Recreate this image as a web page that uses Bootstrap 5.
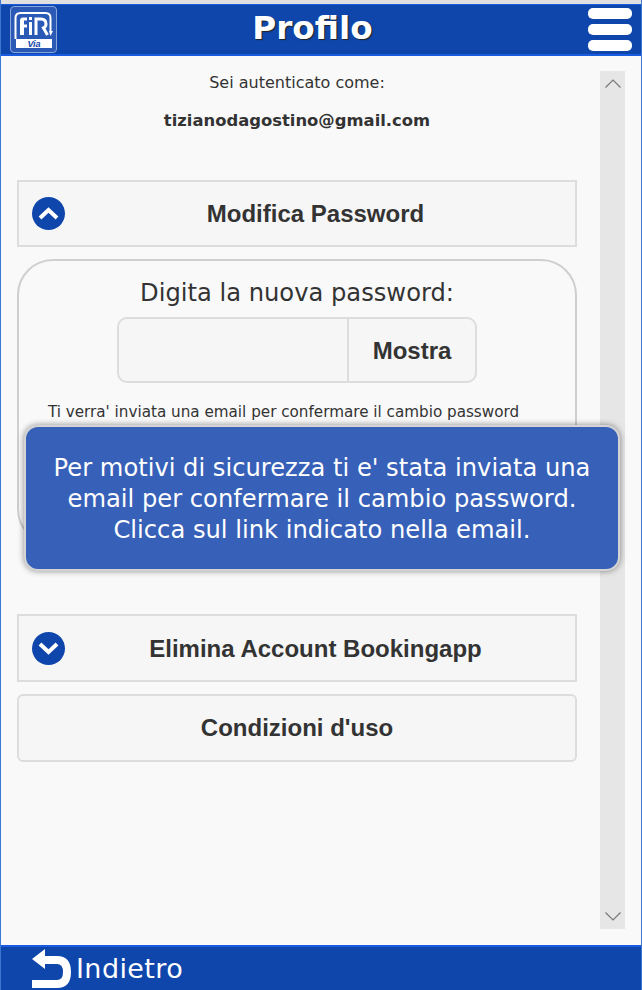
<!DOCTYPE html>
<html lang="it">
<head>
    <meta charset="UTF-8">
    <meta name="viewport" content="width=device-width, initial-scale=1.0">
    <title>Profilo</title>
    <link href="https://cdn.jsdelivr.net/npm/bootstrap@5.3.0/dist/css/bootstrap.min.css" rel="stylesheet">
    <style>
        html, body { height: 100%; }
        body { background: #f9f9f9; color: #333; font-family: "DejaVu Sans", sans-serif; overflow: hidden; }
        .app-page { width: 642px; height: 990px; border-left: 1px solid #3a78d2; border-right: 1px solid #3a78d2; position: relative; }
        .app-head { flex: 0 0 56px; height: 56px; background: #0f46ac; border-top: 4px solid #e0e0e0; border-bottom: 2px solid #1a5ce0; box-shadow: inset 0 1px 0 #1a5ce0; padding: 2px 9px 0 9px; }
        .app-title { font-size: 32.7px; font-weight: 700; color: #fff; line-height: 44px; text-shadow: 1px 1px 1px #222; margin-right: 20px; }
        .logo-box { width: 47px; height: 47px; border: 1px solid #8aa6dc; border-radius: 4px; background: #2a5ab6; }
        .burger { width: 44px; padding-top: 2px; }
        .burger span { display: block; height: 11px; background: #fff; border-radius: 5px; margin-bottom: 5px; }
        .burger span:last-child { margin-bottom: 0; }
        .logo-via { font-family: "Liberation Sans", sans-serif; font-size: 9px; font-weight: 700; font-style: italic; fill: #0f46ac; }
        .app-body { flex: 1 1 auto; min-height: 0; padding: 15px 15px 16px 16px; }
        .main-col { width: 560px; flex: 0 0 560px; }
        .who-line { font-size: 16px; line-height: 22px; text-align: center; padding-top: 1px; }
        .who-mail { font-size: 16.4px; font-weight: 700; line-height: 22px; text-align: center; margin-top: 16px; margin-bottom: 48px; }
        .acc-row { height: 67px; background: #f6f6f6; border: 2px solid #dddddd; font-family: "Liberation Sans", sans-serif; font-weight: 700; font-size: 24px; color: #333; text-align: center; position: relative; }
        .acc-tall { height: 68px; }
        .acc-pad { padding-left: 37px; }
        .acc-low { padding-top: 2px; }
        .acc-round { border-radius: 6px; margin-top: 12px; }
        .acc-dot { width: 33px; height: 33px; border-radius: 50%; background: #0f46ac; position: absolute; left: 13px; top: calc(50% - 16.5px); }
        .pw-panel { height: 286px; margin-top: 12px; border: 2px solid #cfcfcf; border-radius: 36px; background: #f9f9f9; padding-top: 17px; text-align: center; }
        .pw-label { font-size: 24.2px; line-height: 30px; }
        .pw-group { width: 360px; height: 66px; margin: 9px auto 0; }
        .pw-input { width: 230px; background: #f6f6f6; border: 2px solid #dddddd; border-right: 0; border-radius: 10px 0 0 10px; }
        .pw-btn { width: 130px; padding-top: 2px; background: #f6f6f6; border: 2px solid #dddddd; border-radius: 0 10px 10px 0; font-family: "Liberation Sans", sans-serif; font-weight: 700; font-size: 24px; color: #333; }
        .pw-note { font-size: 15.2px; line-height: 22px; margin-top: 18px; padding-right: 27px; white-space: nowrap; }
        .gap-big { height: 69px; }
        .scroll-rail { width: 25px; background: #e6e6e6; margin-left: 23px; }
        .app-foot { flex: 0 0 45px; background: #0f46ac; border-top: 2px solid #1a5ce0; padding-left: 31px; color: #fff; font-size: 27px; letter-spacing: .4px; }
        .foot-label { padding-top: 2px; }
        .notice { position: absolute; left: 23px; top: 425px; width: 596px; height: 146px; background: #3760b8; border: 2px solid #d4d4d4; border-radius: 14px; box-shadow: 0 0 6px rgba(0,0,0,.45); color: #fff; font-size: 24.2px; line-height: 31px; text-align: center; padding-top: 26px; }
    </style>
</head>
<body>
    <div class="app-page d-flex flex-column">
        <!-- Header -->
        <div class="app-head d-flex align-items-start justify-content-between">
            <div class="logo-box d-flex align-items-center justify-content-center">
                <svg width="45" height="45" viewBox="0 0 45 45">
                    <path d="M4.5 32V11q0-5 5-5h25q5 0 5 5v14" fill="none" stroke="#fff" stroke-width="2"/>
                    <path d="M38 24h4l-2.500 5z" fill="#fff"/>
                    <path d="M9 28V13.500q0-3 3-3h4v3h-3v4h3v3h-3v7.500z" fill="#fff"/>
                    <rect x="18" y="10" width="3" height="3" fill="#fff"/>
                    <rect x="18" y="15" width="3" height="13" fill="#fff"/>
                    <path d="M25 28V12h5q5 0 5 5 0 3-2.500 4l4 7" fill="none" stroke="#fff" stroke-width="3"/>
                    <rect x="5" y="32" width="36" height="9" fill="#fff"/>
                    <text class="logo-via" x="23" y="40" text-anchor="middle">Via</text>
                </svg>
            </div>
            <div class="app-title">Profilo</div>
            <div class="burger">
                <span></span><span></span><span></span>
            </div>
        </div>

        <!-- Contenuto -->
        <div class="app-body d-flex">
            <div class="main-col">
                <div class="who-line">Sei autenticato come:</div>
                <div class="who-mail">tizianodagostino@gmail.com</div>

                <div class="acc-row acc-pad d-flex align-items-center justify-content-center">
                    <span class="acc-dot d-flex align-items-center justify-content-center">
                        <svg width="21" height="13" viewBox="0 0 21 13"><path d="M2 11 10.500 3 19 11" fill="none" stroke="#fff" stroke-width="4"/></svg>
                    </span>
                    Modifica Password
                </div>

                <div class="pw-panel">
                    <div class="pw-label">Digita la nuova password:</div>
                    <div class="pw-group d-flex">
                        <div class="pw-input"></div>
                        <div class="pw-btn d-flex align-items-center justify-content-center">Mostra</div>
                    </div>
                    <div class="pw-note">Ti verra' inviata una email per confermare il cambio password</div>
                </div>

                <div class="gap-big"></div>

                <div class="acc-row acc-tall acc-pad acc-low d-flex align-items-center justify-content-center">
                    <span class="acc-dot d-flex align-items-center justify-content-center">
                        <svg width="21" height="13" viewBox="0 0 21 13"><path d="M2 2 10.500 10 19 2" fill="none" stroke="#fff" stroke-width="4"/></svg>
                    </span>
                    Elimina Account Bookingapp
                </div>
                <div class="acc-row acc-tall acc-round d-flex align-items-center justify-content-center">Condizioni d'uso</div>
            </div>
            <div class="scroll-rail d-flex flex-column justify-content-between align-items-center py-2">
                <svg width="16" height="9" viewBox="0 0 16 9"><path d="M0.500 8.500 8 1l7.500 7.500" fill="none" stroke="#777" stroke-width="1.200"/></svg>
                <svg width="16" height="9" viewBox="0 0 16 9"><path d="M0.500 0.500 8 8l7.500-7.500" fill="none" stroke="#777" stroke-width="1.200"/></svg>
            </div>
        </div>

        <!-- Footer -->
        <div class="app-foot d-flex align-items-center gap-1">
            <svg width="40" height="40" viewBox="0 0 40 40">
                <path d="M0 10 13 0V7h12q14 0 14 16t-14 16H0v-8h25q6 0 6-8t-6-8H13v5z" fill="#fff"/>
            </svg>
            <span class="foot-label">Indietro</span>
        </div>

        <!-- Avviso -->
        <div class="notice">Per motivi di sicurezza ti e' stata inviata una<br>email per confermare il cambio password.<br>Clicca sul link indicato nella email.</div>
    </div>
    <script src="https://cdn.jsdelivr.net/npm/bootstrap@5.3.0/dist/js/bootstrap.bundle.min.js"></script>
</body>
</html>
